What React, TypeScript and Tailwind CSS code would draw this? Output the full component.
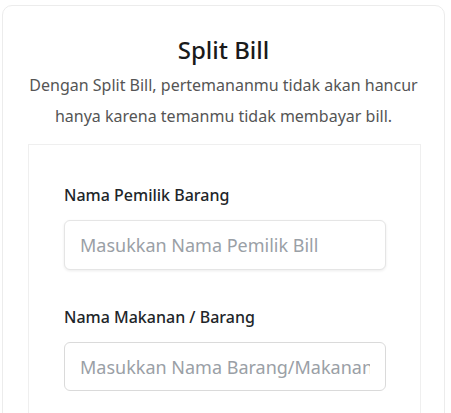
import React from 'react';

const font = { fontFamily: '"Noto Sans", "Open Sans", sans-serif' };

const Field: React.FC<{ label: string; placeholder: string; plain?: boolean }> = ({ label, placeholder, plain }) => (
  <div className="flex flex-col">
    <label className="text-[16px] font-medium text-[#212529] leading-6 mb-[13px]">{label}</label>
    <input
      className={
        plain
          ? 'w-[322px] h-[49px] rounded-[6px] border border-[#dadada] px-[15px] text-[18px] placeholder:text-[#9aa0a6] outline-none bg-white'
          : 'w-[322px] h-[50px] rounded-[6px] border border-[#e5e5e5] shadow-[0_1px_3px_rgba(0,0,0,0.08)] px-[15px] text-[18px] placeholder:text-[#9aa0a6] outline-none bg-white'
      }
      placeholder={placeholder}
    />
  </div>
);

export default function App() {
  return (
    <div className="w-[451px] h-[413px] bg-white overflow-hidden" style={font}>
      <div className="ml-[2px] mt-[5px] w-[443px] h-[430px] rounded-[10px] border border-[#ececec] flex flex-col items-center">
        <h1 className="mt-[28px] text-[24px] font-medium text-[#1a1a1a] leading-8">Split Bill</h1>
        <p className="mt-[4px] text-[16px] text-[#555] leading-[31px] text-center">
          Dengan Split Bill, pertemananmu tidak akan hancur
          <br />
          hanya karena temanmu tidak membayar bill.
        </p>
        <div className="mt-[12px] self-start ml-[25px] w-[393px] flex-1 border border-[#efefef] px-[35px] pt-[38px] flex flex-col gap-[35px]">
          <Field label="Nama Pemilik Barang" placeholder="Masukkan Nama Pemilik Bill" />
          <Field label="Nama Makanan / Barang" placeholder="Masukkan Nama Barang/Makanan" plain />
        </div>
      </div>
    </div>
  );
}
